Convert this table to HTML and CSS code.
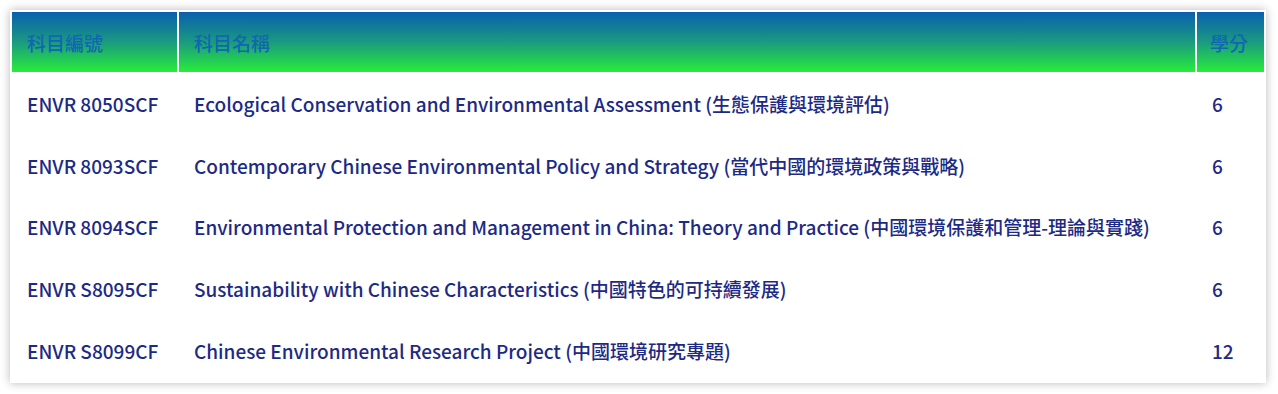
FILE: index.html
```html
<!DOCTYPE html>
<html lang="zh-Hant">
<head>
<meta charset="utf-8">
<link rel="stylesheet" href="styles.css">
</head>
<body>
<div class="wrap">
<table class="courses">
  <thead>
    <tr>
      <th class="c-code">科目編號</th>
      <th class="c-name">科目名稱</th>
      <th class="c-credit">學分</th>
    </tr>
  </thead>
  <tbody>
    <tr><td>ENVR 8050SCF</td><td>Ecological Conservation and Environmental Assessment (生態保護與環境評估)</td><td>6</td></tr>
    <tr><td>ENVR 8093SCF</td><td>Contemporary Chinese Environmental Policy and Strategy (當代中國的環境政策與戰略)</td><td>6</td></tr>
    <tr><td>ENVR 8094SCF</td><td>Environmental Protection and Management in China: Theory and Practice (中國環境保護和管理-理論與實踐)</td><td>6</td></tr>
    <tr><td>ENVR S8095CF</td><td>Sustainability with Chinese Characteristics (中國特色的可持續發展)</td><td>6</td></tr>
    <tr><td>ENVR S8099CF</td><td>Chinese Environmental Research Project (中國環境研究專題)</td><td>12</td></tr>
  </tbody>
</table>
</div>
</body>
</html>
```
FILE: styles.css
```css
html, body {
  margin: 0;
  padding: 0;
  background: #ffffff;
}
body {
  font-family: "Noto Sans CJK TC", "Noto Sans", sans-serif;
  font-size: 19px;
}
.wrap {
  padding: 10px 12px 12px 10px;
}
.courses {
  width: 100%;
  border-collapse: separate;
  border-spacing: 2px;
  background: #ffffff;
  box-shadow: 0 0 9px rgba(0, 0, 0, 0.28);
}
.courses th {
  height: 60px;
  padding: 0 0 0 15px;
  text-align: left;
  font-weight: 500;
  color: #1166b2;
  background: linear-gradient(to bottom, #0a5fae 0%, #1a9a80 50%, #28ec3a 100%);
}
.courses th.c-code { width: 150px; }
.courses th.c-credit { width: 54px; padding-left: 13px; }
.courses td {
  height: 58.75px;
  padding: 0 0 1px 15px;
  font-weight: 500;
  color: #1d2a85;
  vertical-align: middle;
}
```
